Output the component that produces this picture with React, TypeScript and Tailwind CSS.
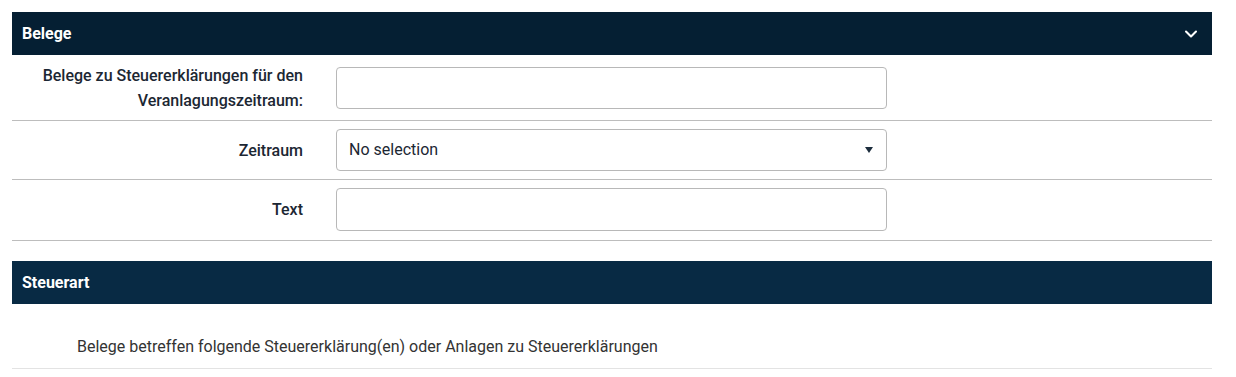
import { ChevronDown } from 'lucide-react';

const font = { fontFamily: 'Roboto, "Noto Sans", sans-serif' };

function Row({ label, children, pad }: { label: React.ReactNode; children: React.ReactNode; pad: string }) {
  return (
    <div className={`flex items-center border-b border-[#bdbdbd] ${pad}`}>
      <div className="w-[291px] text-right text-base font-medium leading-[25px] text-[#1c2733]">{label}</div>
      <div className="ml-[33px] w-[551px]">{children}</div>
    </div>
  );
}

export default function App() {
  return (
    <div className="min-h-screen bg-white px-3 pt-3" style={font}>
      <div className="w-[1200px]">
        <div className="flex h-[43px] items-center justify-between bg-[#051f33] px-[10px] text-white">
          <span className="text-base font-bold">Belege</span>
          <ChevronDown className="mr-[1px] h-[20px] w-[20px]" strokeWidth={2.5} />
        </div>

        <Row label={<>Belege zu Steuererklärungen für den<br />Veranlagungszeitraum:</>} pad="pt-2 pb-[7px]">
          <input className="h-[42px] w-full rounded border border-[#b8b8b8] px-3 text-base outline-none" />
        </Row>
        <Row label="Zeitraum" pad="py-2">
          <div className="flex h-[42px] w-full items-center justify-between rounded border border-[#b8b8b8] pl-3 pr-[13px] text-base text-[#1c2733]">
            <span>No selection</span>
            <svg width="8" height="6" viewBox="0 0 8 6"><path d="M0 0h8L4 6z" fill="#1c2d3d" /></svg>
          </div>
        </Row>
        <Row label="Text" pad="pt-2 pb-[9px]">
          <input className="h-[43px] w-full rounded border border-[#b8b8b8] px-3 text-base outline-none" />
        </Row>

        <div className="mt-5 flex h-[43px] items-center bg-[#082a44] px-[10px] text-white">
          <span className="text-base font-bold">Steuerart</span>
        </div>
        <div className="border-b border-[#e3e3e3] pb-[9px] pl-[65px] pt-[31px] text-base text-[#333]">
          Belege betreffen folgende Steuererklärung(en) oder Anlagen zu Steuererklärungen
        </div>
      </div>
    </div>
  );
}
